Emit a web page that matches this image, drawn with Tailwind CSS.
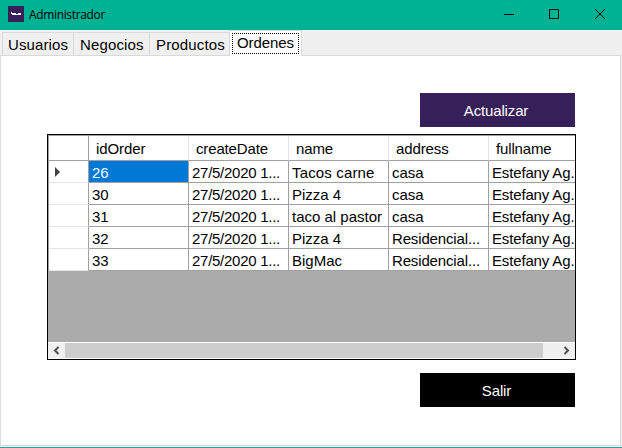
<!DOCTYPE html>
<html lang="es">
<head>
<meta charset="utf-8">
<title>Administrador</title>
<script src="https://cdn.jsdelivr.net/npm/@tailwindcss/browser@4"></script>
</head>
<body class="w-[622px] h-[448px] overflow-hidden">
<div class="w-[622px] h-[448px] flex flex-col bg-[#f0f0f0] border-b border-[#26a69a] font-['Liberation_Sans',Arial,sans-serif] text-[15px] leading-[18px] text-black whitespace-nowrap">
  <header class="h-[30px] shrink-0 bg-[#00b294] flex items-center">
    <svg class="ml-2 mb-[2px] w-4 h-4 shrink-0" viewBox="0 0 16 16" shape-rendering="crispEdges"><rect width="16" height="16" fill="#371f59"/><path d="M3 6h1v1h4v1h2V7h3v2h-4V9H4V8H3z" fill="#fff"/></svg>
    <span class="ml-[5px] w-[78px] font-['Open_Sans','Noto_Sans',sans-serif] text-[12px] tracking-[-0.35px] leading-4">Administrador</span>
    <div class="ml-auto flex">
      <svg class="w-[46px] h-[30px]" viewBox="0 0 46 30"><path d="M18 14.5h10" stroke="#000"/></svg>
      <svg class="w-[45px] h-[30px]" viewBox="0 0 45 30"><path d="M17.500 9.500h9v9h-9z" fill="none" stroke="#000"/></svg>
      <svg class="w-[45px] h-[30px]" viewBox="0 0 45 30"><path d="M18 9l10 10M28 9l-10 10" stroke="#000"/></svg>
    </div>
  </header>
  <nav class="h-[26px] shrink-0 flex items-end pl-[2px] relative z-10 -mb-px">
    <div class="w-[72px] h-[24px] border border-[#d9d9d9] pl-[5px] pt-[3px] tracking-[0.1px]">Usuarios</div>
    <div class="w-[76px] h-[24px] border border-l-0 border-[#d9d9d9] pl-[6px] pt-[3px] tracking-[0.15px]">Negocios</div>
    <div class="w-[79px] h-[24px] border border-x-0 border-[#d9d9d9] pl-[6px] pt-[3px] tracking-[0.15px]">Productos</div>
    <div class="w-[73px] h-[26px] border border-b-0 border-[#d9d9d9] bg-white p-[2px]"><div class="h-[21px] w-[67px] border border-dotted border-black pl-[4px] tracking-[-0.1px]">Ordenes</div></div>
  </nav>
  <main class="w-[621px] h-[391px] shrink-0 border border-[#d9d9d9] bg-white pl-[46px] pt-[37px] flex flex-col">
    <button class="ml-[373px] w-[155px] h-[34px] shrink-0 bg-[#371f59] text-white pr-[3px] pt-[2px] tracking-[-0.15px]">Actualizar</button>
    <section class="mt-[7px] w-[529px] h-[226px] shrink-0 border border-black bg-[#ababab] flex flex-col overflow-hidden">
      <div class="w-[527px] h-[136px] overflow-hidden border-t border-l border-[#a0a0a0]">
        <div class="grid grid-cols-[40px_100px_100px_100px_100px_87px] grid-rows-[25px_22px_22px_22px_22px_22px] bg-white *:border-r *:border-b *:border-[#a0a0a0] *:overflow-hidden *:pl-[3px] *:pt-[3px]">
          <div></div>
          <div class="pl-[7px]! pt-[4px]! border-r-[#e5e5e5]! tracking-[-0.1px]">idOrder</div>
          <div class="pl-[7px]! pt-[4px]! border-r-[#e5e5e5]! tracking-[-0.15px]">createDate</div>
          <div class="pl-[7px]! pt-[4px]! border-r-[#e5e5e5]! tracking-[-0.15px]">name</div>
          <div class="pl-[7px]! pt-[4px]! border-r-[#e5e5e5]! tracking-[-0.1px]">address</div>
          <div class="pl-[7px]! pt-[4px]! tracking-[-0.15px]">fullname</div>
          <div class="border-b-[#e5e5e5]! pl-[6px]! pt-[6px]!"><svg class="w-[6px] h-[10px]" viewBox="0 0 6 10"><path d="M0 0l5 5-5 5z" fill="#404040"/></svg></div>
          <div class="bg-[#0078d7] text-white">26</div><div class="tracking-[-0.27px]">27/5/2020 1...</div><div class="tracking-[0.15px]">Tacos carne</div><div>casa</div><div class="tracking-[-0.15px]">Estefany Ag.</div>
          <div class="border-b-[#e5e5e5]!"></div><div>30</div><div class="tracking-[-0.27px]">27/5/2020 1...</div><div>Pizza 4</div><div>casa</div><div class="tracking-[-0.15px]">Estefany Ag.</div>
          <div class="border-b-[#e5e5e5]!"></div><div>31</div><div class="tracking-[-0.27px]">27/5/2020 1...</div><div>taco al pastor</div><div>casa</div><div class="tracking-[-0.15px]">Estefany Ag.</div>
          <div class="border-b-[#e5e5e5]!"></div><div>32</div><div class="tracking-[-0.27px]">27/5/2020 1...</div><div>Pizza 4</div><div class="tracking-[-0.15px]">Residencial...</div><div class="tracking-[-0.15px]">Estefany Ag.</div>
          <div class="border-b-[#e5e5e5]!"></div><div>33</div><div class="tracking-[-0.27px]">27/5/2020 1...</div><div>BigMac</div><div class="tracking-[-0.15px]">Residencial...</div><div class="tracking-[-0.15px]">Estefany Ag.</div>
        </div>
      </div>
      <div class="mt-auto h-[17px] shrink-0 border-y border-white bg-[#f0f0f0] flex">
        <svg class="w-[17px] h-[15px]" viewBox="0 0 17 15"><path d="M10.500 4L7 7.500L10.500 11" fill="none" stroke="#505050" stroke-width="2"/></svg>
        <div class="w-[478px] bg-[#cdcdcd]"></div>
        <svg class="ml-auto w-[17px] h-[15px]" viewBox="0 0 17 15"><path d="M6.500 4L10 7.500L6.500 11" fill="none" stroke="#505050" stroke-width="2"/></svg>
      </div>
    </section>
    <button class="mt-[13px] ml-[373px] w-[155px] h-[34px] shrink-0 bg-black text-white pr-[2px] pt-[2px] tracking-[-0.1px]">Salir</button>
  </main>
</div>
</body>
</html>
